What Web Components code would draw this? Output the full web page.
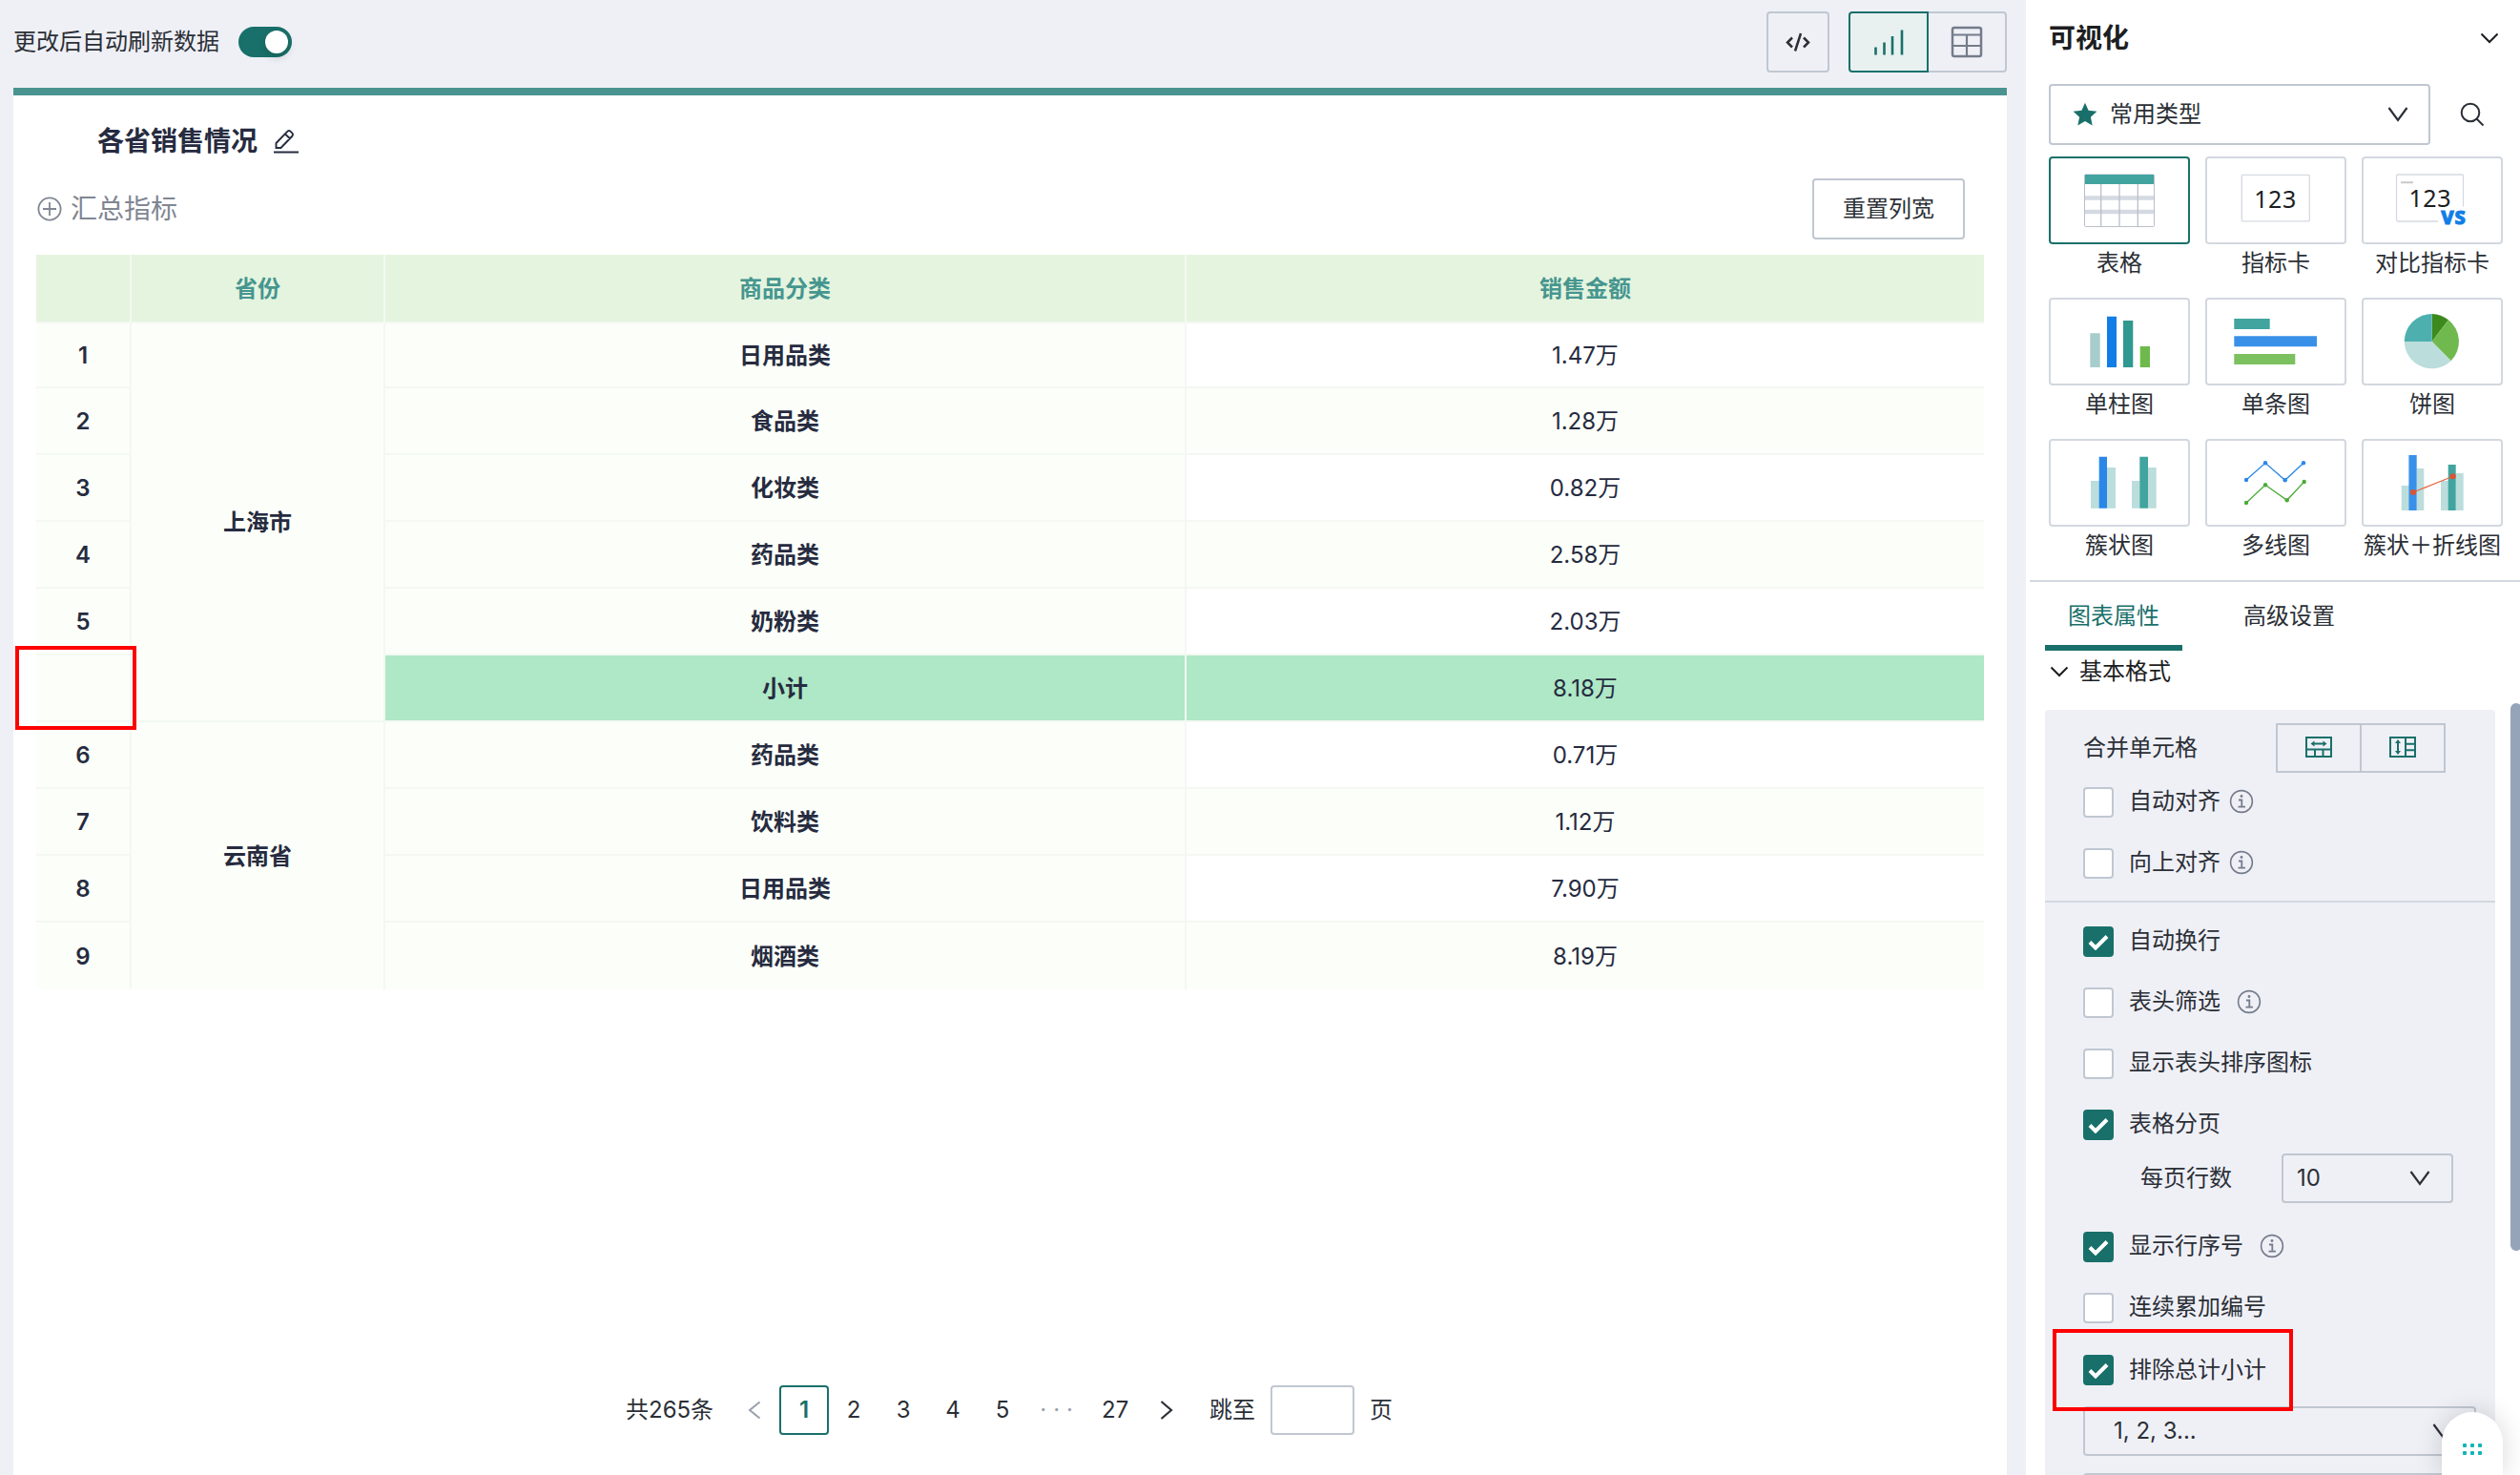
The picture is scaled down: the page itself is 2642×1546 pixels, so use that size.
<!DOCTYPE html>
<html lang="zh-CN">
<head>
<meta charset="utf-8">
<title>各省销售情况</title>
<style>
  html, body {
    margin: 0;
    height: 100%;
    overflow: hidden;
  }
  body {
    --primary: #19706a;
    --line: #c0c7d1;
    --surface: #eff0f6;
    font-family: Inter, "Noto Sans CJK SC", sans-serif;
    font-size: 24px;
    line-height: 36px;
    color: #2b2f36;
    background: #eff0f6;
  }
</style>
</head>
<body>

<report-app></report-app>

<script>

/**
 * Attach an open shadow root with the given markup.
 *
 * @param {HTMLElement} host
 * @param {string} html
 */
function render(host, html) {
  const shadowRoot = host.attachShadow({mode: 'open'});
  shadowRoot.innerHTML = `<style>*{box-sizing:border-box}</style>${ html }`;
}

/**
 *
 * UiIcon
 *  - stroke icons
 *
 */
class UiIcon extends HTMLElement {

  // [width, height, content]
  static icons = {
    code: [26, 20, '<path d="M7 5.5 2 10.5l5 5M19 5.5l5 5-5 5" stroke-width="2.5"/><path d="M16 1 10 19.500" stroke-width="2.500"/>'],
    bars: [32, 28, '<path d="M2.500 19.500v8M11.500 14.500v13M20 8v19.500M30 1.500v26" stroke-width="2.600"/>'],
    grid: [34, 34, '<rect x="2" y="2" width="30" height="30" rx="2" stroke-width="2.500"/><path d="M2 9.500h30M2 21h30M17 9.500V32" stroke-width="2.200"/>'],
    edit: [28, 26, '<path d="M1 24.500h26" stroke-width="2"/><path d="M3.500 20v-5L15.500 2.600q1.500-1.300 3 0l2 2q1.200 1.400 0 2.900L8.500 20zM13 5.500l5.200 5" stroke-width="1.900"/>'],
    plus: [26, 26, '<circle cx="13" cy="13" r="11.600" stroke-width="1.800"/><path d="M6 13h14M13 6v14" stroke-width="1.800"/>'],
    chevron: [20, 12, '<path d="M1.500 1.500 10 10l8.500-8.500" stroke-width="2"/>'],
    caret: [22, 16, '<path d="m1.500 1 9.500 13L20.500 1" stroke-width="2.200"/>'],
    prev: [14, 20, '<path d="M12.500 1.500 2 10l10.500 8.500" stroke-width="2"/>'],
    next: [14, 20, '<path d="M1.500 1 12 10 1.500 19" stroke-width="2.200"/>'],
    search: [26, 26, '<circle cx="11" cy="11" r="9.300" stroke-width="2"/><path d="m17.500 17.500 7 7" stroke-width="2"/>'],
    star: [26, 26, '<path d="m13 .8 3.600 8 8.800 1-6.500 5.900 1.800 8.700L13 20.100l-7.700 4.300 1.800-8.700L.6 9.800l8.800-1z" fill="currentColor" stroke="none"/>'],
    check: [22, 17, '<path d="m2 8.500 6 6L20 2.500" stroke-width="4"/>'],
    info: [26, 26, '<circle cx="13" cy="13" r="11.400" stroke-width="1.600"/><path d="M10 11.500h3.300v7M9.500 18.700h7.500" stroke-width="1.800"/><circle cx="13" cy="7.500" r="1.400" fill="currentColor" stroke="none"/>'],
    mergeRow: [28, 22, '<path d="M1 1h26v20H1zM1 13.500h26M10 13.500V21M18.500 13.500V21" stroke-width="2"/><path d="M8 7.500h12" stroke-width="2"/><path d="m5.500 7.500 4-3v6zM22.500 7.500l-4-3v6z" fill="currentColor" stroke="none"/>'],
    mergeColumn: [28, 22, '<path d="M1 1h26v20H1zM17 1v20M17 7.700h10M17 14.300h10" stroke-width="2"/><path d="M9 6v10" stroke-width="2"/><path d="m9 3-3 4h6zM9 19l-3-4h6z" fill="currentColor" stroke="none"/>']
  };

  connectedCallback() {
    const [width, height, content] = UiIcon.icons[this.getAttribute('name')];
    render(this, `
      <style>
        :host{ display: inline-flex; flex: none; }
      </style>
      <svg width="${ width }" height="${ height }" viewBox="0 0 ${ width } ${ height }" fill="none" stroke="currentColor">${ content }</svg>
    `);
  }

}

customElements.define('ui-icon', UiIcon);

/**
 *
 * UiSwitch
 *
 */
class UiSwitch extends HTMLElement {

  connectedCallback() {
    render(this, `
      <style>
        :host{
          display: flex;
          justify-content: flex-end;
          width: 56px;
          height: 32px;
          padding: 4px;
          border-radius: 16px;
          background: var(--primary);
          box-sizing: border-box;
        }
        .knob{
          width: 24px;
          height: 24px;
          border-radius: 50%;
          background: #fff;
          box-shadow: 0 4px 8px rgba(0,35,11,.2);
        }
      </style>
      <div class="knob"></div>
    `);
  }

}

customElements.define('ui-switch', UiSwitch);

/**
 *
 * UiSelect
 *  - closed dropdown, the value goes in the slot
 *
 */
class UiSelect extends HTMLElement {

  connectedCallback() {
    render(this, `
      <style>
        :host{
          display: flex;
          align-items: center;
          justify-content: space-between;
          border: 2px solid var(--line);
          border-radius: 4px;
          box-sizing: border-box;
        }
        .value{
          display: flex;
          align-items: center;
        }
      </style>
      <div class="value"><slot></slot></div>
      <ui-icon name="caret"></ui-icon>
    `);
  }

}

customElements.define('ui-select', UiSelect);

/**
 *
 * CheckRow
 *  - checkbox with label, optional info mark
 *
 */
class CheckRow extends HTMLElement {

  connectedCallback() {
    const info = this.hasAttribute('info') ? '<ui-icon class="info" name="info"></ui-icon>' : '';
    render(this, `
      <style>
        :host{
          display: flex;
          align-items: center;
          height: 64px;
        }
        .box{
          display: flex;
          align-items: center;
          justify-content: center;
          width: 32px;
          height: 32px;
          margin-right: 16px;
          border: 2px solid var(--line);
          border-radius: 4px;
          background: #fff;
          color: #fff;
        }
        :host([checked]) .box{
          border-color: var(--primary);
          background: var(--primary);
        }
        .label{
          padding-bottom: var(--label-shift, 2px);
        }
        .info{
          margin-left: var(--info-gap, 9px);
          margin-bottom: 2px;
          color: #747c8b;
        }
      </style>
      <div class="box">${ this.hasAttribute('checked') ? '<ui-icon name="check"></ui-icon>' : '' }</div>
      <div class="label"><slot></slot></div>
      ${ info }
    `);
  }

}

customElements.define('check-row', CheckRow);

/**
 *
 * ChartTile
 *  - one entry in the chart type gallery
 *
 */
class ChartTile extends HTMLElement {

  static art = {
    table: `
      <rect x="37.500" y="19" width="73" height="54.500" rx="1" fill="#fff" stroke="#b9bfca"/>
      <path d="M38 43.500h72M38 58h72" stroke="#d5dae2" stroke-width="4.600"/>
      <path d="M54.700 29v44M74 29v44M93.300 29v44" stroke="#b9bfca" stroke-width="1.300"/>
      <path d="M38 19h72v10H38z" fill="#41a49f"/>`,
    metric: `
      <rect x="38.300" y="19.300" width="71" height="48.500" rx="1" fill="#fff" stroke="#d5dae2" stroke-width="1.300"/>
      <text x="73.500" y="54.300" class="num">123</text>`,
    compare: `
      <path d="M80 68H38q-1.500 0-1.500-1.500v-46q0-1.500 1.500-1.500h67q1.500 0 1.500 1.500v32" fill="none" stroke="#d5dae2" stroke-width="1.300"/>
      <path d="M41 27.300h13" stroke="#c9c9cb" stroke-width="2"/>
      <text x="71.800" y="53.300" class="num">123</text>
      <text x="96.500" y="71" class="vs">VS</text>`,
    column: `
      <path d="M43.300 37.300h10.400V73H43.300z" fill="#a6cdcb"/>
      <path d="M61 19.700h10V73H61z" fill="#127de6"/>
      <path d="M78 24h10.300v49H78z" fill="#2f9890"/>
      <path d="M95.700 51H106v22H95.700z" fill="#6eb94b"/>`,
    bar: `
      <path d="M30.300 22h37.400v11H30.300z" fill="#41a49f"/>
      <path d="M30.300 40.300H117v11H30.300z" fill="#3990e9"/>
      <path d="M30.300 59h64v11h-64z" fill="#7cc05f"/>`,
    pie: `
      <path d="M73.700 46V17A29 29 0 0 1 91 23.300z" fill="#3c8a1d"/>
      <path d="M73.700 46 91 23.300a29 29 0 0 1 2.700 43z" fill="#70b94e"/>
      <path d="m73.700 46 20 20.300A29 29 0 0 1 44.700 46z" fill="#bbdddb"/>
      <path d="M73.700 46h-29a29 29 0 0 1 29-29z" fill="#4db0ae"/>`,
    cluster: `
      <path d="M44 44h9v28.700h-9zM61 30h9v42.700h-9zM87 44h8.500v28.700H87zM104 30h8.700v42.700H104z" fill="#bbdddb"/>
      <path d="M52.700 18.700H61v54h-8.300z" fill="#2a87e8"/>
      <path d="M95.300 18.700h8.700v54h-8.700z" fill="#41a49f"/>`,
    lines: `
      <path d="m43 43 20-17.700 20.700 18L103 25.300" fill="none" stroke="#2a87e8" stroke-width="1.300"/>
      <path d="m43 67 20-18.700 22.700 16 18-19.300" fill="none" stroke="#4bab36" stroke-width="1.300"/>
      <g fill="#2a87e8"><circle cx="43" cy="43" r="2.200"/><circle cx="63" cy="25.300" r="2.200"/><circle cx="83.700" cy="43.300" r="2.200"/><circle cx="103" cy="25.300" r="2.200"/></g>
      <g fill="#4bab36"><circle cx="43" cy="67" r="2.200"/><circle cx="63" cy="48.300" r="2.200"/><circle cx="85.700" cy="64.300" r="2.200"/><circle cx="103.700" cy="45" r="2.200"/></g>`,
    combo: `
      <path d="M41.700 49h8v26h-8zM57.700 31h7.600v44h-7.600zM83 44h8v31h-8zM98.700 36h8v39h-8z" fill="#bbdddb"/>
      <path d="M49.400 17h8.300v58h-8.300z" fill="#3990e9"/>
      <path d="M90.700 27h8v48h-8z" fill="#41a49f"/>
      <path d="m54 56 41.700-16.700" stroke="#e8633f" stroke-width="1.200"/>
      <circle cx="54" cy="56" r="3" fill="#df5230"/><circle cx="95.700" cy="39.300" r="3" fill="#df5230"/>`
  };

  connectedCallback() {
    render(this, `
      <style>
        :host{
          display: flex;
          flex-direction: column;
          align-items: center;
          height: 148px;
          white-space: nowrap;
        }
        svg{
          flex: none;
          border-radius: 4px;
          box-shadow: inset 0 0 0 2px #d3d8df;
        }
        :host([active]) svg{
          box-shadow: inset 0 0 0 2px var(--primary);
        }
        .label{
          margin-top: 2px;
        }
        text{
          text-anchor: middle;
          font-family: "Noto Sans", sans-serif;
        }
        .num{
          font-size: 25px;
          letter-spacing: .6px;
          fill: #1c1e22;
        }
        .vs{
          font-size: 20px;
          font-weight: 800;
          letter-spacing: 1px;
          fill: #127de6;
          stroke: #127de6;
          stroke-width: 1;
        }
      </style>
      <svg width="148" height="92" viewBox="0 0 148 92">${ ChartTile.art[this.getAttribute('type')] }</svg>
      <div class="label"><slot></slot></div>
    `);
  }

}

customElements.define('chart-tile', ChartTile);

/**
 *
 * SalesTable
 *  - grouped table, merged province cells and subtotal rows
 *
 */
class SalesTable extends HTMLElement {

  groups = [
    {
      province: '上海市',
      rows: [['日用品类', '1.47万'], ['食品类', '1.28万'], ['化妆类', '0.82万'], ['药品类', '2.58万'], ['奶粉类', '2.03万']],
      subtotal: '8.18万'
    },
    {
      province: '云南省',
      rows: [['药品类', '0.71万'], ['饮料类', '1.12万'], ['日用品类', '7.90万'], ['烟酒类', '8.19万']]
    }
  ];

  getCells() {
    let line = 0;
    let index = 0;
    return this.groups.map(({province, rows, subtotal}, g) => {
      const all = subtotal ? [...rows, ['小计', subtotal, true]] : rows;
      const isLastGroup = (g === this.groups.length - 1);
      let html = `<div class="cell key ${ isLastGroup ? 'end' : '' }" style="grid-area: ${ line + 2 } / 2 / span ${ all.length }">${ province }</div>`;
      all.forEach(([category, value, isTotal], i) => {
        line++;
        const row = line + 1;
        const end = (isLastGroup && i === all.length - 1) ? 'end' : '';
        const type = isTotal ? 'total' : (line % 2 ? 'odd' : '');
        html += `
          <div class="cell key ${ end }" style="grid-area: ${ row } / 1">${ isTotal ? '' : ++index }</div>
          <div class="cell key ${ end } ${ isTotal ? 'total' : '' }" style="grid-area: ${ row } / 3">${ category }</div>
          <div class="cell last ${ end } ${ type }" style="grid-area: ${ row } / 4">${ value }</div>
        `;
      });
      return html;
    }).join('');
  }

  connectedCallback() {
    render(this, `
      <style>
        :host{
          display: grid;
          grid-template-columns: 100px 266px 840px 836px;
          grid-template-rows: 72px 68px repeat(9, 70px);
          color: #262b40;
        }
        .cell{
          display: flex;
          align-items: center;
          justify-content: center;
          padding-top: 2px;
          border-right: 2px solid #f4f8f2;
          border-bottom: 2px solid #f4f8f2;
          background: #fcfff9;
        }
        .head{
          background: #e5f4df;
          color: #46968f;
          font-weight: 600;
        }
        .key{
          font-weight: 600;
        }
        .last{
          border-right: 0;
        }
        .end{
          border-bottom: 0;
        }
        .odd{
          background: #fff;
        }
        .total{
          background: #aee8c6;
        }
      </style>
      <div class="cell head"></div>
      <div class="cell head">省份</div>
      <div class="cell head">商品分类</div>
      <div class="cell head last">销售金额</div>
      ${ this.getCells() }
    `);
  }

}

customElements.define('sales-table', SalesTable);

/**
 *
 * TablePager
 *
 */
class TablePager extends HTMLElement {

  connectedCallback() {
    render(this, `
      <style>
        :host{
          display: flex;
          align-items: center;
          height: 52px;
        }
        .page{
          display: flex;
          align-items: center;
          justify-content: center;
          width: 52px;
          height: 52px;
        }
        .active{
          border: 2px solid var(--primary);
          border-radius: 4px;
          color: var(--primary);
          font-weight: 600;
        }
        .prev{
          margin: 0 19px 0 36px;
          color: #9aa0ab;
        }
        .dots{
          width: 62px;
          padding-left: 6px;
          letter-spacing: 7px;
          color: #9aa0ab;
          font-size: 24px;
        }
        .wide{
          width: 60px;
        }
        .next{
          margin: 0 38px 0 17px;
        }
        .jump{
          width: 88px;
          height: 52px;
          margin: 0 16px;
          border: 2px solid var(--line);
          border-radius: 4px;
        }
      </style>
      <div>共265条</div>
      <ui-icon class="prev" name="prev"></ui-icon>
      <div class="page active">1</div>
      <div class="page">2</div>
      <div class="page">3</div>
      <div class="page">4</div>
      <div class="page">5</div>
      <div class="page dots">···</div>
      <div class="page wide">27</div>
      <ui-icon class="next" name="next"></ui-icon>
      <div>跳至</div>
      <div class="jump"></div>
      <div>页</div>
    `);
  }

}

customElements.define('table-pager', TablePager);

/**
 *
 * ReportCanvas
 *  - toolbar and the report card
 *
 */
class ReportCanvas extends HTMLElement {

  connectedCallback() {
    render(this, `
      <style>
        :host{
          display: flex;
          flex-direction: column;
          padding: 0 20px 0 14px;
          box-sizing: border-box;
          background: var(--surface);
        }
        .toolbar{
          display: flex;
          align-items: center;
          height: 92px;
          padding-bottom: 4px;
        }
        .toolbar ui-switch{
          margin-left: 20px;
          margin-right: auto;
        }
        .tool{
          display: flex;
          align-items: center;
          justify-content: center;
          width: 66px;
          height: 64px;
          border: 2px solid var(--line);
          border-radius: 4px;
        }
        .chart{
          width: 84px;
          margin-left: 20px;
          border-color: var(--primary);
          border-radius: 4px 0 0 4px;
          background: #e8f1f0;
          color: var(--primary);
        }
        .grid{
          width: 82px;
          border-left: 0;
          border-radius: 0 4px 4px 0;
          color: #747c8b;
        }
        .card{
          flex: 1;
          display: flex;
          flex-direction: column;
          border-top: 8px solid #4a9490;
          background: #fff;
          padding: 0 24px;
        }
        .title{
          display: flex;
          align-items: center;
          gap: 16px;
          margin: 28px 0 0 64px;
          height: 40px;
          font-size: 28px;
          font-weight: 600;
          color: #262b40;
        }
        .actions{
          display: flex;
          align-items: center;
          height: 64px;
          margin: 19px 20px 16px 1px;
          color: #808692;
          font-size: 28px;
        }
        .actions ui-icon{
          margin-right: 9px;
        }
        .reset{
          display: flex;
          align-items: center;
          justify-content: center;
          width: 160px;
          height: 64px;
          margin-left: auto;
          border: 2px solid var(--line);
          border-radius: 4px;
          font-size: 24px;
          color: #2b2f36;
        }
        table-pager{
          margin: auto 0 42px 618px;
        }
      </style>
      <div class="toolbar">
        <div>更改后自动刷新数据</div>
        <ui-switch></ui-switch>
        <div class="tool"><ui-icon name="code"></ui-icon></div>
        <div class="tool chart"><ui-icon name="bars"></ui-icon></div>
        <div class="tool grid"><ui-icon name="grid"></ui-icon></div>
      </div>
      <div class="card">
        <div class="title">各省销售情况<ui-icon name="edit"></ui-icon></div>
        <div class="actions">
          <ui-icon name="plus"></ui-icon>
          <span>汇总指标</span>
          <div class="reset">重置列宽</div>
        </div>
        <sales-table></sales-table>
        <table-pager></table-pager>
      </div>
    `);
  }

}

customElements.define('report-canvas', ReportCanvas);

/**
 *
 * FormatSettings
 *  - basic format options of the table
 *
 */
class FormatSettings extends HTMLElement {

  connectedCallback() {
    render(this, `
      <style>
        :host{
          display: block;
          flex: none;
          width: 472px;
          height: 820px;
          margin-left: 20px;
          padding-top: 14px;
          border-radius: 4px;
          background: var(--surface);
          box-sizing: border-box;
        }
        check-row{
          margin-left: 40px;
        }
        .merge{
          display: flex;
          align-items: center;
          justify-content: space-between;
          height: 52px;
          padding: 0 52px 0 40px;
        }
        .buttons{
          display: flex;
          width: 178px;
          height: 52px;
          border: 2px solid var(--line);
          color: var(--primary);
        }
        .buttons div{
          flex: 1;
          display: flex;
          align-items: center;
          justify-content: center;
          padding-bottom: 2px;
        }
        .buttons div + div{
          border-left: 2px solid var(--line);
        }
        hr{
          height: 2px;
          margin: 6px 0 9px;
          border: 0;
          background: #d3d8df;
        }
        .page-size{
          display: flex;
          align-items: center;
          justify-content: space-between;
          margin: -2px 44px 14px 100px;
        }
        .page-size ui-select{
          width: 180px;
          height: 52px;
          padding: 0 22px 0 14px;
        }
        .numbering{
          height: 52px;
          margin: 5px 20px 18px 40px;
          padding: 0 22px 0 30px;
        }
      </style>
      <div class="merge">
        <span>合并单元格</span>
        <div class="buttons">
          <div><ui-icon name="mergeRow"></ui-icon></div>
          <div><ui-icon name="mergeColumn"></ui-icon></div>
        </div>
      </div>
      <check-row info style="height: 62px">自动对齐</check-row>
      <check-row info style="height: 66px">向上对齐</check-row>
      <hr>
      <check-row checked>自动换行</check-row>
      <check-row info style="--info-gap: 17px">表头筛选</check-row>
      <check-row>显示表头排序图标</check-row>
      <check-row checked>表格分页</check-row>
      <div class="page-size"><span>每页行数</span><ui-select>10</ui-select></div>
      <check-row checked info style="--info-gap: 17px">显示行序号</check-row>
      <check-row>连续累加编号</check-row>
      <check-row checked style="height: 66px; --label-shift: 0">排除总计小计</check-row>
      <ui-select class="numbering">1, 2, 3...</ui-select>
      <ui-select class="numbering"></ui-select>
    `);
  }

}

customElements.define('format-settings', FormatSettings);

/**
 *
 * VisualPanel
 *  - chart gallery and properties
 *
 */
class VisualPanel extends HTMLElement {

  connectedCallback() {
    render(this, `
      <style>
        :host{
          display: flex;
          flex-direction: column;
          overflow: hidden;
          background: #fff;
        }
        .head, .filter, .gallery, .tabs, .group{
          flex: none;
        }
        .head{
          display: flex;
          align-items: center;
          justify-content: space-between;
          height: 88px;
          padding: 0 22px 8px 24px;
          font-size: 28px;
          font-weight: 700;
          color: #1c1e22;
        }
        .filter{
          display: flex;
          align-items: center;
          gap: 31px;
          height: 64px;
          padding-left: 24px;
        }
        .filter ui-select{
          width: 400px;
          height: 64px;
          padding: 0 21px 0 23px;
        }
        .star{
          margin-right: 13px;
          color: var(--primary);
        }
        .gallery{
          display: grid;
          grid-template-columns: repeat(3, 148px);
          column-gap: 16px;
          padding: 12px 24px 0;
        }
        .tabs{
          display: flex;
          height: 74px;
          margin-left: 4px;
          padding-left: 16px;
          border-top: 2px solid #d3d8df;
        }
        .tab{
          width: 144px;
          margin-right: 40px;
          padding-top: 18px;
          text-align: center;
        }
        .active{
          border-bottom: 6px solid var(--primary);
          color: var(--primary);
        }
        .group{
          display: flex;
          align-items: center;
          gap: 11px;
          height: 62px;
          padding: 0 0 18px 25px;
          color: #1c1e22;
        }
      </style>
      <div class="head">可视化<ui-icon name="chevron"></ui-icon></div>
      <div class="filter">
        <ui-select><ui-icon class="star" name="star"></ui-icon>常用类型</ui-select>
        <ui-icon name="search"></ui-icon>
      </div>
      <div class="gallery">
        <chart-tile type="table" active>表格</chart-tile>
        <chart-tile type="metric">指标卡</chart-tile>
        <chart-tile type="compare">对比指标卡</chart-tile>
        <chart-tile type="column">单柱图</chart-tile>
        <chart-tile type="bar">单条图</chart-tile>
        <chart-tile type="pie">饼图</chart-tile>
        <chart-tile type="cluster">簇状图</chart-tile>
        <chart-tile type="lines">多线图</chart-tile>
        <chart-tile type="combo">簇状＋折线图</chart-tile>
      </div>
      <div class="tabs">
        <div class="tab active">图表属性</div>
        <div class="tab">高级设置</div>
      </div>
      <div class="group"><ui-icon name="chevron"></ui-icon>基本格式</div>
      <format-settings></format-settings>
    `);
  }

}

customElements.define('visual-panel', VisualPanel);

/**
 *
 * HelpDock
 *  - floating handle in the bottom corner
 *
 */
class HelpDock extends HTMLElement {

  connectedCallback() {
    render(this, `
      <style>
        :host{
          display: grid;
          grid-template-columns: repeat(3, 4px);
          grid-auto-rows: 4px;
          gap: 4px;
          justify-content: center;
          padding-top: 33px;
          border-radius: 32px 32px 0 0;
          background: #fff;
          box-shadow: 0 0 28px rgba(0,0,0,.16);
          box-sizing: border-box;
        }
        i{
          border-radius: 1px;
          background: #14b4b4;
        }
      </style>
      <i></i><i></i><i></i><i></i><i></i><i></i>
    `);
  }

}

customElements.define('help-dock', HelpDock);

/**
 *
 * ReportApp
 *
 */
class ReportApp extends HTMLElement {

  connectedCallback() {
    render(this, `
      <style>
        :host{
          position: relative;
          display: grid;
          grid-template-columns: 2124px 1fr;
          height: 100vh;
          overflow: hidden;
        }
        report-canvas, visual-panel{
          height: 100vh;
        }
        /* overlays */
        .mark, .thumb, help-dock{
          position: absolute;
        }
        .mark{
          border: 4px solid #fe0000;
        }
        .row-mark{
          left: 16px;
          top: 677px;
          width: 127px;
          height: 88px;
        }
        .option-mark{
          left: 2152px;
          top: 1393px;
          width: 252px;
          height: 86px;
        }
        .thumb{
          right: -2px;
          top: 737px;
          width: 12px;
          height: 574px;
          border-radius: 6px;
          background: #95a4b8;
        }
        help-dock{
          right: 18px;
          bottom: 0;
          width: 64px;
          height: 66px;
        }
      </style>
      <report-canvas></report-canvas>
      <visual-panel></visual-panel>
      <div class="thumb"></div>
      <div class="mark row-mark"></div>
      <div class="mark option-mark"></div>
      <help-dock></help-dock>
    `);
  }

}

customElements.define('report-app', ReportApp);

</script>
</body>
</html>
